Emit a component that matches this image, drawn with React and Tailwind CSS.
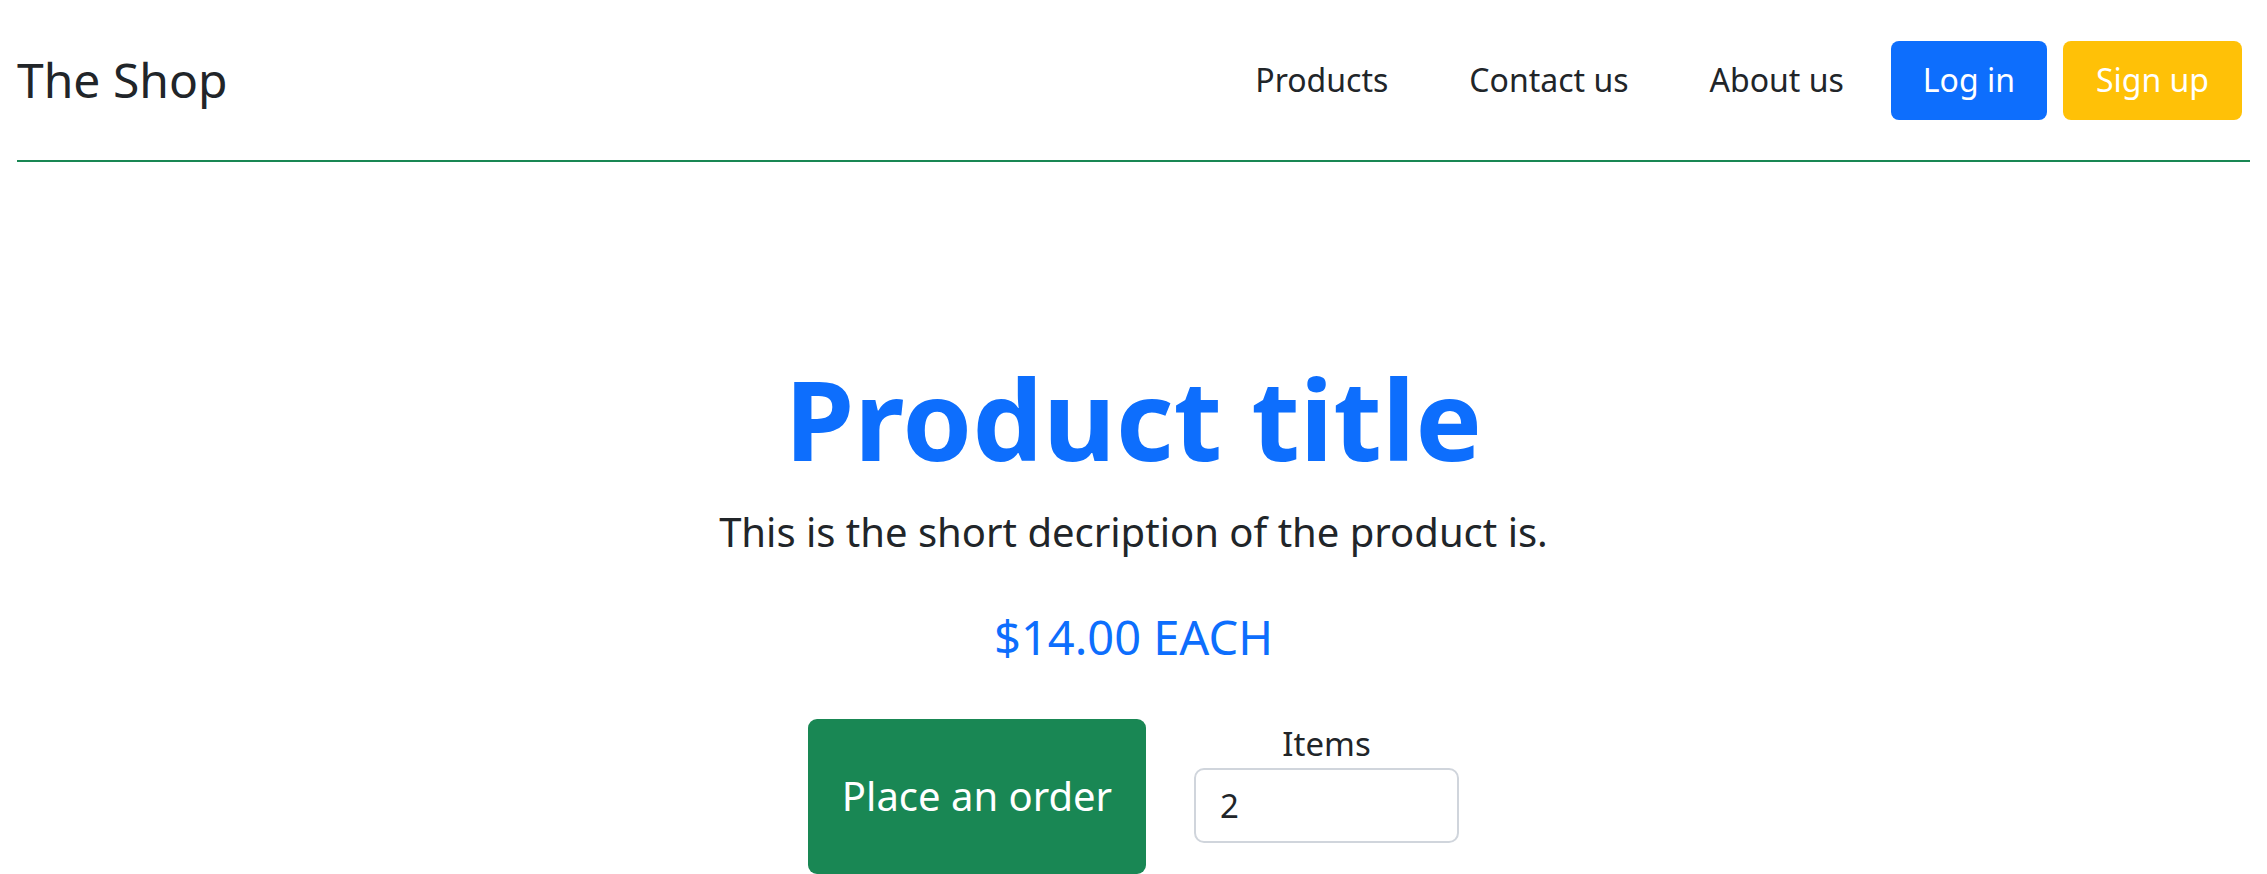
import { useState } from "react";

const navLinks = ["Products", "Contact us", "About us"];

export default function App() {
  const [items, setItems] = useState("2");

  return (
    <div className="min-h-screen bg-white text-[#212529] font-['Noto_Sans',sans-serif]">
      {/* header */}
      <header className="mx-[17px] h-[162px] flex items-center justify-between border-b-2 border-[#198754]">
        <a href="#" className="text-[48px] leading-none">The Shop</a>
        <nav className="flex items-center pr-[8px]">
          <ul className="flex items-center gap-[81px] text-[32px]">
            {navLinks.map(l => (
              <li key={l}><a href="#">{l}</a></li>
            ))}
          </ul>
          <div className="flex items-center gap-[16px] ml-[47px]">
            <button className="h-[79px] px-[32px] rounded-[8px] bg-[#0d6efd] text-white text-[32px]">Log in</button>
            <button className="h-[79px] px-[33px] rounded-[8px] bg-[#ffc107] text-white text-[32px]">Sign up</button>
          </div>
        </nav>
      </header>

      {/* product */}
      <main className="flex flex-col items-center text-center pt-[189px]">
        <h1 className="text-[112px] font-bold leading-[1.2] text-[#0d6efd]">Product title</h1>
        <p className="mt-[17px] text-[40px] leading-[1.5]">This is the short decription of the product is.</p>
        <p className="mt-[47px] text-[47px] leading-[1.2] text-[#0d6efd]">$14.00 EACH</p>
        <div className="mt-[53px] flex items-start gap-[48px]">
          <button className="w-[338px] h-[155px] rounded-[9px] bg-[#198754] text-white text-[40px]">Place an order</button>
          <div className="flex flex-col items-center">
            <label htmlFor="items" className="text-[33px] leading-[1.5]">Items</label>
            <input
              id="items"
              value={items}
              onChange={e => setItems(e.target.value)}
              className="w-[265px] h-[75px] px-[24px] border-2 border-[#d0d5dc] rounded-[10px] text-[33px] text-left outline-none"
            />
          </div>
        </div>
      </main>
    </div>
  );
}
